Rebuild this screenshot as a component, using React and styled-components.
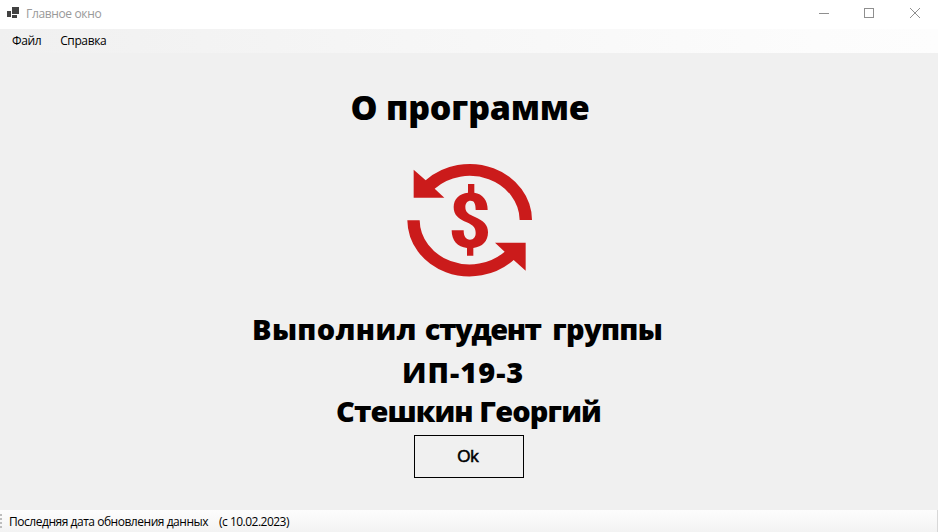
import React from "react";
import styled, { createGlobalStyle } from "styled-components";

const GlobalStyle = createGlobalStyle`
  * { box-sizing: border-box; }
  body { margin: 0; overflow: hidden; }
`;

const Window = styled.div`
  width: 938px;
  height: 532px;
  display: flex;
  flex-direction: column;
  background: #f0f0f0;
  color: #000;
  font-family: "Open Sans", "Noto Sans", sans-serif;
  font-size: 12px;
`;

const TitleBar = styled.header`
  height: 29px;
  display: flex;
  align-items: flex-start;
  background: #fff;
`;

const AppIcon = styled.svg`
  width: 12px;
  height: 11px;
  margin: 7px 0 0 7px;
`;

const Label = styled.span`
  display: block;
  white-space: pre;
  line-height: 16px;
  margin-left: ${(p) => p.$gap}px;
  margin-top: ${(p) => p.$top || 0}px;
  letter-spacing: ${(p) => p.$spacing || 0}px;
  color: ${(p) => p.$color || "#000"};
`;

const WindowControls = styled.svg`
  width: 102px;
  height: 12px;
  margin: 7px 17px 0 auto;
`;

const MenuBar = styled.nav`
  height: 24px;
  display: flex;
  background: linear-gradient(90deg, #f0f0f0, #fcfcfc 87%, #fdfdfd);
`;

const Content = styled.main`
  flex: 1;
  display: flex;
  flex-direction: column;
  align-items: flex-start;
`;

const Heading = styled.div`
  font-family: "Open Sans", "Noto Sans", sans-serif;
  font-weight: 800;
  font-size: ${(p) => p.$size}px;
  line-height: ${(p) => p.$line}px;
  margin: ${(p) => p.$top || 0}px 0 0 ${(p) => p.$left}px;
  letter-spacing: ${(p) => p.$spacing || 0}px;
  white-space: pre;
`;

const Word = styled.span`
  letter-spacing: ${(p) => p.$spacing}px;
`;

const Logo = styled.svg`
  width: 130px;
  height: 120px;
  margin: 30px 0 0 405px;
`;

const OkButton = styled.button`
  width: 110px;
  height: 43px;
  margin: 6px 0 0 414px;
  padding: 0 2px 0 0;
  border: 1px solid #000;
  background: #f0f0f0;
  color: #000;
  font: 17px/20px "Liberation Sans", Arial, sans-serif;
  -webkit-text-stroke: 0.5px #000;
`;

const StatusBar = styled.footer`
  height: 22px;
  display: flex;
  background: linear-gradient(#fdfdfd, #f3f3f3);
  border-right: 1px solid #d8d8d8;
`;

const Grip = styled.div`
  width: 2px;
  height: 15px;
  margin-top: 4px;
  background: repeating-linear-gradient(#bdbdbd 0 2px, transparent 2px 4px);
`;

export default function App() {
  return (
    <Window>
      <GlobalStyle />
      <TitleBar>
        <AppIcon viewBox="0 0 12 11" fill="#424242" shapeRendering="crispEdges">
          <path d="M5 0h7v7H5zM0 4h4v6H0zM5 8h5v3H5z" />
        </AppIcon>
        <Label $gap={7} $top={6} $spacing={-0.36} $color="#999">Главное окно</Label>
        <WindowControls viewBox="0 0 102 12" fill="none" stroke="#8f8f8f">
          <path d="M0 6.5h10M45.500 1.500h9v9h-9z" shapeRendering="crispEdges" />
          <path d="M91 1l10 10M101 1L91 11" />
        </WindowControls>
      </TitleBar>
      <MenuBar>
        <Label $gap={12} $top={4} $spacing={-0.4}>Файл</Label>
        <Label $gap={19} $top={4} $spacing={-0.38}>Справка</Label>
      </MenuBar>
      <Content>
        <Heading $size={34} $line={46} $top={31} $left={350.5} $spacing={-0.2}>О программе</Heading>
        <Logo viewBox="30 30 390 360" fill="#cb1b1b">
          <path d="M56 59L92 91A187 168 0 0 1 411 210H374A150 134 0 0 0 119 116L148 143H56Z" />
          <path d="M392 362L356 330A187 169 0 0 1 37 211H74A150 134 0 0 0 329 305L300 278H392Z" />
          <path d="M219 102H238V128C263 132 278 150 278 180H242C242 162 238 152 227 152C217 152 211 160 211 171C211 188 222 193 240 201C266 213 279 224 279 247C279 274 262 291 235 294V317H216V294C188 291 170 273 170 241H206C206 260 213 269 225 269C236 269 242 261 242 249C242 233 235 226 215 217C190 206 176 195 176 171C176 147 193 131 219 128Z" />
        </Logo>
        <Heading $size={29} $line={42} $top={28} $left={252}>
          <Word $spacing={0.35}>Выполнил </Word>
          <Word $spacing={-1.4}>студент</Word>
          <Word $spacing={4}> </Word>
          <Word $spacing={-0.7}>группы</Word>
        </Heading>
        <Heading $size={29} $line={42} $top={1} $left={402} $spacing={1}>ИП-19-3</Heading>
        <Heading $size={29} $line={37} $top={-1} $left={336} $spacing={-0.9}>Стешкин Георгий</Heading>
        <OkButton>Ok</OkButton>
      </Content>
      <StatusBar>
        <Grip />
        <Label $gap={7} $top={4} $spacing={-0.47}>Последняя дата обновления данных</Label>
        <Label $gap={11} $top={4} $spacing={-0.52}>(с 10.02.2023)</Label>
      </StatusBar>
    </Window>
  );
}
